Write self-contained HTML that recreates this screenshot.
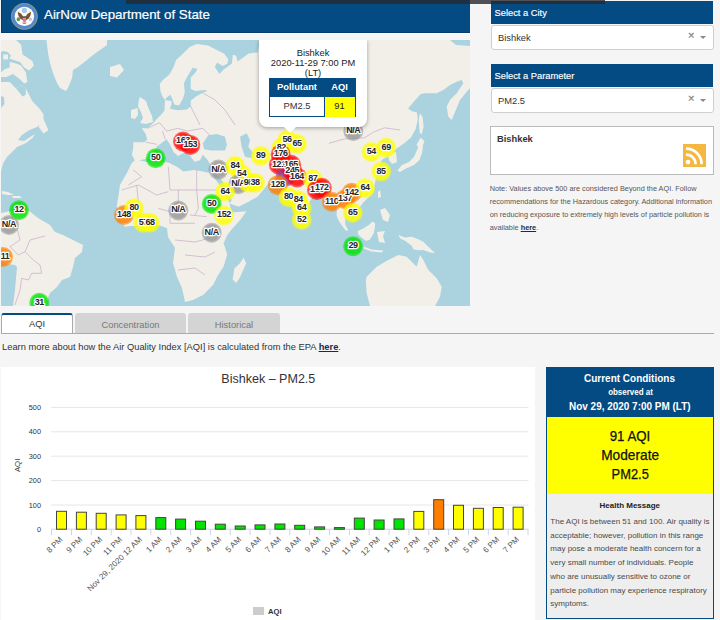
<!DOCTYPE html>
<html><head><meta charset="utf-8">
<style>
*{box-sizing:border-box}
html,body{margin:0;padding:0}
body{width:720px;height:620px;overflow:hidden;position:relative;background:#f5f5f5;font-family:"Liberation Sans",sans-serif;color:#333}
.abs{position:absolute}
#hdr{left:1px;top:0;width:469px;height:34px;background:#044a83;border-bottom:1px solid #fff;box-shadow:inset 1px -1px 0 #023c70}
#hdr .t{position:absolute;left:43px;top:5.8px;font-size:13.33px;line-height:18px;color:#fff;-webkit-text-stroke:0.2px #fff}
#topbar{left:126px;top:0;width:479px;height:3.5px;background:rgba(37,40,48,0.8);z-index:5}
#map{left:1px;top:40px;width:469px;height:266px;overflow:hidden;background:#aad3df}
.rh{left:491px;width:222px;height:23px;background:#044a83;color:#fff;font-size:9.33px;padding:7px 0 0 3.5px;-webkit-text-stroke:0.15px #fff}
.sel{left:491px;width:223px;height:25px;background:#fff;border:1px solid #cfcfcf;border-radius:3px;font-size:9.33px;padding:6.5px 0 0 6px;color:#333}
.sel .x{position:absolute;left:196px;top:3px;font-size:11px;line-height:12px;color:#888;-webkit-text-stroke:0.3px #888}
.sel .ar{position:absolute;left:208px;top:10px;width:0;height:0;border-left:3px solid transparent;border-right:3px solid transparent;border-top:3px solid #888}
#rss{left:490px;top:126px;width:224px;height:49px;background:#fff;border:1px solid #bbb}
#note{left:489.7px;top:182px;width:225px;font-size:7.33px;line-height:13px;color:#555}
.tab{top:313px;height:21px;background:#d4d4d4;border-radius:3px 3px 0 0;font-size:9.33px;color:#777;text-align:center;padding-top:6.5px}
#tabline{left:1px;top:333px;width:713px;height:1px;background:#aaa}
#learn{left:2px;top:341.5px;font-size:9.33px;color:#333;white-space:nowrap}
#learn b,#note b{color:#1a2a4a;text-decoration:underline}
#chart{left:1px;top:367px;width:534px;height:253px;background:#fff}
#cc{left:546px;top:367px;width:168px;height:252px;border:1px solid #044a83;background:#eee}
</style></head><body>
<div id="hdr" class="abs">
 <svg class="abs" style="left:10px;top:3px" width="28" height="28" viewBox="0 0 28 28">
  <circle cx="13.4" cy="13.4" r="13.1" fill="#5588cc" stroke="#a9ad6c" stroke-width="0.7"/>
  <circle cx="13.4" cy="13.4" r="9.7" fill="#fbfbfb"/>
  <circle cx="13.4" cy="7.4" r="2.6" fill="#a9c9e2"/>
  <path d="M6.6,8.8 L10.2,10.7 L12.1,13.4 L11.8,17.3 L9.1,15.6 L7.4,12.4Z M20.2,8.8 L16.6,10.7 L14.7,13.4 L15,17.3 L17.7,15.6 L19.4,12.4Z" fill="#7b5126"/>
  <path d="M7.5,7.8 L8.5,9 L7.5,9.5Z M19.3,7.8 L18.3,9 L19.3,9.5Z" fill="#d8c050"/>
  <ellipse cx="7.4" cy="16.2" rx="1.7" ry="2" fill="#5a9a50"/>
  <ellipse cx="19.4" cy="16.4" rx="1.6" ry="1.8" fill="#c8c8c8"/>
  <rect x="11.8" y="13.2" width="3.3" height="2" fill="#3f63a8"/>
  <path d="M11.8,15.2 L15.1,15.2 L15.1,18.3 L13.45,19.5 L11.8,18.3Z" fill="#e07a7e"/>
  <path d="M11,19.5 L15.8,19.5 L14.5,21 L12.3,21Z" fill="#a09080"/>
 </svg>
 <div class="t">AirNow Department of State</div>
</div>
<div id="topbar" class="abs"></div>
<div id="map" class="abs">
 <svg width="469" height="266" viewBox="1 40 469 266" style="display:block">
  <g fill="#f2efe9"><path d="M1.0,40.0 L16.0,40.0 L21.0,44.8 L22.6,54.5 L32.3,61.0 L33.9,65.8 L29.0,70.6 L24.2,67.4 L20.0,62.0 L14.0,60.0 L9.0,58.5 L11.0,56.0 L8.0,52.0 L3.0,51.0 L1.0,52.0Z"/><path d="M3.2,54.5 L8.0,54.5 L8.0,59.4 L3.2,59.4Z"/><path d="M9.7,62.0 L16.0,63.5 L21.0,65.5 L25.8,72.3 L27.4,82.0 L24.2,83.5 L19.4,78.7 L12.9,73.9 L6.5,77.0 L1.0,77.0 L1.0,72.3 L5.0,69.0 L9.7,67.4Z"/><path d="M1.0,82.0 L9.7,82.0 L16.0,88.4 L21.0,85.2 L25.8,88.4 L27.4,91.6 L32.3,101.3 L38.7,107.7 L43.5,114.2 L43.5,119.0 L37.1,127.1 L29.0,130.3 L22.0,135.0 L18.0,140.0 L24.0,141.0 L35.0,134.0 L33.0,137.5 L26.0,143.0 L17.0,147.0 L12.0,152.0 L7.0,157.0 L3.3,163.0 L1.7,168.0 L1.0,172.0Z"/><path d="M47.0,41.0 L53.0,41.0 L54.0,48.0 L49.0,49.0Z"/><path d="M38.7,120.6 L43.5,119.0 L48.4,130.3 L43.5,133.5 L38.7,127.1Z"/><path d="M46.5,40.0 L107.0,40.0 L107.0,45.0 L93.0,55.0 L87.0,60.0 L78.0,67.0 L73.0,70.0 L72.0,78.0 L68.0,88.0 L66.0,91.0 L60.0,88.0 L57.0,83.0 L53.0,73.0 L50.0,63.0 L48.0,53.0Z"/><path d="M110.0,67.0 L120.0,64.0 L124.0,70.0 L117.0,77.5 L110.0,76.0Z"/><path d="M2.0,191.0 L8.0,192.0 L14.0,195.0 L8.0,195.0 L2.0,194.0Z"/><path d="M12.0,196.0 L20.0,196.0 L22.0,198.0 L13.0,198.0Z"/><path d="M1.0,213.0 L10.0,211.0 L28.0,210.0 L38.0,218.0 L50.0,225.0 L55.0,232.0 L63.0,235.0 L73.0,240.0 L83.0,245.0 L82.0,252.0 L75.0,258.0 L73.0,267.0 L70.0,277.0 L62.0,280.0 L57.0,287.0 L50.0,293.0 L47.0,300.0 L45.0,306.0 L13.0,306.0 L15.0,290.0 L17.0,267.0 L15.0,265.0 L1.0,263.0Z"/><path d="M134.7,160.3 L131.9,154.7 L133.3,147.8 L133.3,142.2 L144.4,142.2 L147.2,139.4 L145.8,133.9 L141.7,128.3 L147.2,128.3 L153.3,123.3 L155.8,120.0 L161.6,114.2 L164.5,110.3 L165.0,100.0 L162.6,96.8 L160.6,91.9 L159.7,84.2 L162.6,80.3 L169.4,74.5 L173.2,67.7 L176.1,60.0 L183.3,53.3 L190.0,46.7 L197.0,44.0 L208.0,45.6 L214.8,49.0 L223.9,53.5 L228.4,59.2 L227.2,63.7 L222.7,66.0 L217.1,62.6 L214.8,67.1 L219.3,73.9 L223.9,69.3 L231.8,63.7 L232.9,54.7 L236.3,55.8 L237.4,61.4 L240.8,59.2 L248.7,53.5 L257.7,52.4 L260.0,40.0 L450.0,40.0 L456.0,45.0 L470.0,46.0 L470.0,88.3 L466.7,91.7 L460.0,100.0 L451.7,120.0 L448.3,116.7 L446.7,106.7 L450.0,100.0 L456.7,93.3 L463.3,83.3 L461.7,80.0 L456.7,81.7 L450.0,85.0 L443.3,90.0 L436.7,93.3 L425.0,93.3 L420.7,93.9 L414.8,100.6 L408.1,108.4 L411.9,111.3 L416.8,112.3 L417.8,119.0 L415.8,128.7 L411.0,137.4 L404.2,143.2 L397.4,148.1 L390.0,155.0 L381.7,160.0 L377.7,171.0 L375.0,183.0 L373.2,192.6 L363.1,202.7 L359.7,207.3 L356.0,212.0 L350.0,208.0 L345.0,212.0 L345.3,224.4 L348.2,230.2 L346.3,231.1 L342.4,226.3 L338.6,220.5 L336.6,215.6 L337.0,205.0 L333.0,195.0 L325.0,190.0 L315.0,192.0 L308.0,205.0 L303.0,218.0 L300.0,226.0 L297.2,212.4 L291.6,198.9 L284.8,187.6 L278.0,188.0 L269.0,180.8 L267.9,184.2 L263.4,189.8 L257.7,196.6 L247.6,202.2 L238.5,206.8 L229.5,203.4 L231.8,212.4 L246.4,211.3 L240.8,219.2 L231.8,229.3 L227.3,235.0 L223.6,243.3 L227.2,254.2 L223.6,266.8 L220.0,272.0 L217.0,277.0 L213.0,285.0 L203.0,295.0 L193.0,300.0 L185.0,302.0 L182.0,288.0 L177.0,277.0 L173.0,263.0 L175.0,248.0 L168.0,237.0 L167.0,228.0 L158.0,225.0 L150.0,224.0 L140.0,226.0 L130.0,226.0 L125.0,226.7 L120.0,220.0 L116.7,206.7 L118.3,196.7 L120.0,185.0 L126.7,173.3 L131.7,163.3 L134.0,161.0Z"/></g>
  <g fill="#aad3df"><path d="M16.0,88.4 L21.0,85.2 L25.8,88.4 L25.8,94.8 L22.6,96.5 L19.0,92.0Z"/><path d="M1.0,96.0 L4.0,97.0 L4.5,104.0 L1.0,108.0Z"/><path d="M138.9,160.3 L145.8,158.9 L152.8,154.7 L156.9,146.4 L162.5,142.2 L166.7,139.4 L169.4,143.6 L173.6,151.9 L177.8,156.1 L183.3,153.3 L186.1,151.9 L190.3,156.1 L194.4,161.7 L200.0,160.3 L202.8,154.7 L206.9,158.9 L211.1,165.8 L212.0,170.0 L208.3,172.8 L202.8,171.4 L194.4,170.0 L183.3,171.4 L177.8,167.2 L169.4,163.1 L163.9,161.7 L155.6,161.7 L145.8,161.7Z"/><path d="M202.8,143.6 L208.3,135.3 L216.7,133.9 L225.0,136.7 L227.0,145.0 L225.0,150.6 L211.1,150.6 L204.2,149.2Z"/><path d="M240.0,136.7 L246.7,133.3 L250.0,140.0 L248.3,146.7 L253.3,153.3 L251.7,158.3 L245.0,156.7 L241.7,146.7Z"/><path d="M215.0,173.3 L221.7,180.0 L226.7,188.3 L231.7,200.0 L230.0,203.3 L225.0,195.0 L218.3,183.3 L213.3,176.7Z"/><path d="M248.0,176.0 L256.0,178.0 L263.0,183.0 L260.0,185.0 L252.0,182.0 L247.0,179.0Z"/><path d="M165.0,100.0 L166.5,97.8 L170.3,94.8 L172.3,98.7 L174.2,104.5 L179.0,105.5 L182.9,98.7 L184.8,91.9 L183.9,83.2 L186.8,77.4 L192.6,67.7 L197.4,68.7 L195.5,72.6 L190.7,77.4 L190.7,89.0 L195.5,91.0 L205.2,90.0 L207.1,91.0 L202.3,92.9 L195.5,96.8 L190.7,100.7 L190.7,106.5 L186.8,109.4 L179.0,110.3 L173.2,109.4 L170.0,108.5 L171.5,104.0 L171.5,101.0 L168.0,100.5Z"/></g><g fill="#f2efe9"><path d="M140.0,97.0 L146.0,101.0 L148.0,107.0 L152.0,116.0 L153.0,122.0 L146.0,124.0 L140.0,123.0 L143.0,118.0 L141.0,112.0 L138.0,106.0 L139.0,99.0Z"/><path d="M131.0,110.0 L137.5,108.0 L138.0,115.0 L135.0,119.0 L131.0,118.0Z"/><path d="M397.5,170.5 L402.0,165.0 L409.0,162.0 L414.0,157.0 L417.0,150.0 L419.5,145.0 L423.0,146.0 L422.0,153.0 L419.5,160.0 L414.0,165.0 L406.0,168.5 L400.0,172.0Z"/><path d="M416.8,144.2 L420.7,137.4 L424.5,141.3 L422.6,146.1 L418.7,149.0Z"/><path d="M419.7,113.2 L422.6,117.1 L423.6,126.8 L421.6,134.5 L419.7,132.6 L418.7,121.0Z"/><path d="M388.0,154.0 L396.0,152.0 L397.0,162.0 L392.0,164.0 L389.0,160.0Z"/><path d="M378.0,192.0 L380.0,190.0 L381.0,197.0 L378.0,198.0Z"/><path d="M380.0,210.0 L385.0,208.0 L390.0,215.0 L388.0,222.0 L383.0,220.0Z"/><path d="M357.9,231.1 L363.7,228.2 L369.5,224.4 L372.4,221.5 L375.3,223.4 L374.4,230.2 L373.4,234.0 L369.5,239.9 L365.7,240.8 L360.8,236.9 L357.9,234.0Z"/><path d="M363.7,246.6 L371.5,249.5 L383.1,250.5 L382.1,252.4 L371.5,251.5 L363.7,248.6Z"/><path d="M377.0,232.0 L385.0,231.0 L383.0,236.0 L385.0,243.0 L379.0,242.0Z"/><path d="M398.3,235.0 L405.0,237.5 L411.7,236.7 L418.3,239.2 L423.3,241.7 L428.3,246.7 L435.0,253.0 L430.0,252.5 L423.3,250.0 L418.3,250.3 L413.3,249.2 L411.7,245.8 L405.0,240.8 L400.0,238.3Z"/><path d="M366.7,276.7 L376.7,266.7 L388.3,260.0 L398.3,255.0 L406.7,256.7 L410.0,260.0 L416.7,266.7 L420.0,255.0 L423.3,260.0 L428.3,270.0 L436.7,278.3 L441.7,286.7 L440.0,296.7 L435.0,306.0 L370.0,306.0 L366.7,293.3 L365.8,280.0Z"/><path d="M243.5,257.8 L246.2,263.2 L239.9,277.6 L236.2,283.0 L232.6,279.4 L234.4,268.6 L239.9,263.2Z"/></g>
  <g fill="none" stroke="#cbb3cb" stroke-width="0.8"><polyline points="121.7,190.0 138.3,185.0 156.7,195.0 168.3,191.7"/><polyline points="168.3,166.7 170.0,190.0"/><polyline points="196.7,170.0 196.7,190.0"/><polyline points="170.0,190.0 178.3,190.0 196.7,190.0 216.7,190.0"/><polyline points="178.3,190.0 178.3,203.3"/><polyline points="196.7,190.0 198.3,208.3 195.0,215.0"/><polyline points="136.7,185.0 138.3,201.7"/><polyline points="158.3,208.3 170.0,211.7 170.0,223.3"/><polyline points="190.0,215.0 206.7,216.7"/><polyline points="170.0,223.3 195.0,223.3"/><polyline points="133.3,170.0 141.7,176.7 128.3,185.0"/><polyline points="175.0,240.0 195.0,242.0 210.0,238.0"/><polyline points="185.0,255.0 205.0,257.0 215.0,252.0"/><polyline points="178.0,270.0 195.0,268.0 205.0,275.0"/><polyline points="16.7,226.7 20.0,240.0 10.0,246.7 18.3,255.0 25.0,251.7 33.3,260.0 40.0,265.0 41.7,273.3 31.7,273.3 28.3,280.0 21.7,278.3 20.0,290.0 15.0,305.0"/><polyline points="25.0,251.7 30.0,240.0 45.0,236.0"/><polyline points="147.2,128.3 159.7,122.8 166.7,131.1 177.8,128.3 187.5,131.1 202.8,128.3 211.1,136.7"/><polyline points="162.5,131.1 165.3,139.4"/><polyline points="145.8,142.2 156.9,144.3"/><polyline points="190.0,105.0 195.0,115.0 200.0,125.0"/><polyline points="203.0,93.0 215.0,100.0 225.0,110.0 235.0,125.0"/><polyline points="328.9,143.3 344.4,138.9 364.4,137.8 373.3,132.2 384.4,127.8 400.0,130.0"/></g>
  <g><circle cx="183" cy="141.5" r="10" fill="#ff0000" fill-opacity="0.6"/><circle cx="183" cy="141.5" r="8.5" fill="#ff0000" fill-opacity="0.6"/><circle cx="190.3" cy="144.9" r="10" fill="#ff0000" fill-opacity="0.6"/><circle cx="190.3" cy="144.9" r="8.5" fill="#ff0000" fill-opacity="0.6"/><circle cx="155.7" cy="158.3" r="10" fill="#00e400" fill-opacity="0.6"/><circle cx="155.7" cy="158.3" r="8.5" fill="#00e400" fill-opacity="0.6"/><circle cx="218.4" cy="169.6" r="10" fill="#999999" fill-opacity="0.6"/><circle cx="218.4" cy="169.6" r="8.5" fill="#999999" fill-opacity="0.6"/><circle cx="235" cy="166" r="10" fill="#ffff00" fill-opacity="0.6"/><circle cx="235" cy="166" r="8.5" fill="#ffff00" fill-opacity="0.6"/><circle cx="241.7" cy="174.3" r="10" fill="#ffff00" fill-opacity="0.6"/><circle cx="241.7" cy="174.3" r="8.5" fill="#ffff00" fill-opacity="0.6"/><circle cx="238.3" cy="184.3" r="10" fill="#999999" fill-opacity="0.6"/><circle cx="238.3" cy="184.3" r="8.5" fill="#999999" fill-opacity="0.6"/><circle cx="248.3" cy="182.7" r="10" fill="#ffff00" fill-opacity="0.6"/><circle cx="248.3" cy="182.7" r="8.5" fill="#ffff00" fill-opacity="0.6"/><circle cx="255" cy="182.7" r="10" fill="#ffff00" fill-opacity="0.6"/><circle cx="255" cy="182.7" r="8.5" fill="#ffff00" fill-opacity="0.6"/><circle cx="225" cy="191.7" r="10" fill="#ffff00" fill-opacity="0.6"/><circle cx="225" cy="191.7" r="8.5" fill="#ffff00" fill-opacity="0.6"/><circle cx="211.7" cy="204" r="10" fill="#00e400" fill-opacity="0.6"/><circle cx="211.7" cy="204" r="8.5" fill="#00e400" fill-opacity="0.6"/><circle cx="224" cy="215.5" r="10" fill="#ffff00" fill-opacity="0.6"/><circle cx="224" cy="215.5" r="8.5" fill="#ffff00" fill-opacity="0.6"/><circle cx="211.7" cy="232.7" r="10" fill="#999999" fill-opacity="0.6"/><circle cx="211.7" cy="232.7" r="8.5" fill="#999999" fill-opacity="0.6"/><circle cx="178.3" cy="210.5" r="10" fill="#999999" fill-opacity="0.6"/><circle cx="178.3" cy="210.5" r="8.5" fill="#999999" fill-opacity="0.6"/><circle cx="124" cy="215" r="10" fill="#ff7e00" fill-opacity="0.6"/><circle cx="124" cy="215" r="8.5" fill="#ff7e00" fill-opacity="0.6"/><circle cx="134" cy="208.3" r="10" fill="#ffff00" fill-opacity="0.6"/><circle cx="134" cy="208.3" r="8.5" fill="#ffff00" fill-opacity="0.6"/><circle cx="143.3" cy="222.7" r="10" fill="#ffff00" fill-opacity="0.6"/><circle cx="143.3" cy="222.7" r="8.5" fill="#ffff00" fill-opacity="0.6"/><circle cx="150" cy="222.7" r="10" fill="#ffff00" fill-opacity="0.6"/><circle cx="150" cy="222.7" r="8.5" fill="#ffff00" fill-opacity="0.6"/><circle cx="19" cy="210.3" r="10" fill="#00e400" fill-opacity="0.6"/><circle cx="19" cy="210.3" r="8.5" fill="#00e400" fill-opacity="0.6"/><circle cx="9" cy="225" r="10" fill="#999999" fill-opacity="0.6"/><circle cx="9" cy="225" r="8.5" fill="#999999" fill-opacity="0.6"/><circle cx="3" cy="257" r="10" fill="#ff7e00" fill-opacity="0.6"/><circle cx="3" cy="257" r="8.5" fill="#ff7e00" fill-opacity="0.6"/><circle cx="39.3" cy="302.7" r="10" fill="#00e400" fill-opacity="0.6"/><circle cx="39.3" cy="302.7" r="8.5" fill="#00e400" fill-opacity="0.6"/><circle cx="260.7" cy="156" r="10" fill="#ffff00" fill-opacity="0.6"/><circle cx="260.7" cy="156" r="8.5" fill="#ffff00" fill-opacity="0.6"/><circle cx="287" cy="140" r="10" fill="#ffff00" fill-opacity="0.6"/><circle cx="287" cy="140" r="8.5" fill="#ffff00" fill-opacity="0.6"/><circle cx="297" cy="144" r="10" fill="#ffff00" fill-opacity="0.6"/><circle cx="297" cy="144" r="8.5" fill="#ffff00" fill-opacity="0.6"/><circle cx="281.3" cy="147.8" r="10" fill="#ffff00" fill-opacity="0.6"/><circle cx="281.3" cy="147.8" r="8.5" fill="#ffff00" fill-opacity="0.6"/><circle cx="280.7" cy="154.4" r="10" fill="#ff0000" fill-opacity="0.6"/><circle cx="280.7" cy="154.4" r="8.5" fill="#ff0000" fill-opacity="0.6"/><circle cx="278.9" cy="164.7" r="10" fill="#ff0000" fill-opacity="0.6"/><circle cx="278.9" cy="164.7" r="8.5" fill="#ff0000" fill-opacity="0.6"/><circle cx="291" cy="164.7" r="10" fill="#ff0000" fill-opacity="0.6"/><circle cx="291" cy="164.7" r="8.5" fill="#ff0000" fill-opacity="0.6"/><circle cx="285.6" cy="176.8" r="10" fill="#8f3f97" fill-opacity="0.6"/><circle cx="285.6" cy="176.8" r="8.5" fill="#8f3f97" fill-opacity="0.6"/><circle cx="292.2" cy="170.7" r="10" fill="#ff0000" fill-opacity="0.6"/><circle cx="292.2" cy="170.7" r="8.5" fill="#ff0000" fill-opacity="0.6"/><circle cx="297" cy="177.4" r="10" fill="#ff0000" fill-opacity="0.6"/><circle cx="297" cy="177.4" r="8.5" fill="#ff0000" fill-opacity="0.6"/><circle cx="312.8" cy="179.2" r="10" fill="#ffff00" fill-opacity="0.6"/><circle cx="312.8" cy="179.2" r="8.5" fill="#ffff00" fill-opacity="0.6"/><circle cx="317" cy="190" r="10" fill="#ff0000" fill-opacity="0.6"/><circle cx="317" cy="190" r="8.5" fill="#ff0000" fill-opacity="0.6"/><circle cx="321.8" cy="187.7" r="10" fill="#ff0000" fill-opacity="0.6"/><circle cx="321.8" cy="187.7" r="8.5" fill="#ff0000" fill-opacity="0.6"/><circle cx="277.7" cy="185.2" r="10" fill="#ff7e00" fill-opacity="0.6"/><circle cx="277.7" cy="185.2" r="8.5" fill="#ff7e00" fill-opacity="0.6"/><circle cx="288.6" cy="197.3" r="10" fill="#ffff00" fill-opacity="0.6"/><circle cx="288.6" cy="197.3" r="8.5" fill="#ffff00" fill-opacity="0.6"/><circle cx="298.3" cy="200.3" r="10" fill="#ffff00" fill-opacity="0.6"/><circle cx="298.3" cy="200.3" r="8.5" fill="#ffff00" fill-opacity="0.6"/><circle cx="301.7" cy="208.3" r="10" fill="#ffff00" fill-opacity="0.6"/><circle cx="301.7" cy="208.3" r="8.5" fill="#ffff00" fill-opacity="0.6"/><circle cx="301.7" cy="220" r="10" fill="#ffff00" fill-opacity="0.6"/><circle cx="301.7" cy="220" r="8.5" fill="#ffff00" fill-opacity="0.6"/><circle cx="331.7" cy="201.7" r="10" fill="#ff7e00" fill-opacity="0.6"/><circle cx="331.7" cy="201.7" r="8.5" fill="#ff7e00" fill-opacity="0.6"/><circle cx="345" cy="199.3" r="10" fill="#ff7e00" fill-opacity="0.6"/><circle cx="345" cy="199.3" r="8.5" fill="#ff7e00" fill-opacity="0.6"/><circle cx="351.7" cy="192.7" r="10" fill="#ff7e00" fill-opacity="0.6"/><circle cx="351.7" cy="192.7" r="8.5" fill="#ff7e00" fill-opacity="0.6"/><circle cx="365" cy="188.3" r="10" fill="#ffff00" fill-opacity="0.6"/><circle cx="365" cy="188.3" r="8.5" fill="#ffff00" fill-opacity="0.6"/><circle cx="352.7" cy="212.7" r="10" fill="#ffff00" fill-opacity="0.6"/><circle cx="352.7" cy="212.7" r="8.5" fill="#ffff00" fill-opacity="0.6"/><circle cx="371.3" cy="152" r="10" fill="#ffff00" fill-opacity="0.6"/><circle cx="371.3" cy="152" r="8.5" fill="#ffff00" fill-opacity="0.6"/><circle cx="386.2" cy="147.7" r="10" fill="#ffff00" fill-opacity="0.6"/><circle cx="386.2" cy="147.7" r="8.5" fill="#ffff00" fill-opacity="0.6"/><circle cx="381.1" cy="171.6" r="10" fill="#ffff00" fill-opacity="0.6"/><circle cx="381.1" cy="171.6" r="8.5" fill="#ffff00" fill-opacity="0.6"/><circle cx="353.3" cy="131" r="10" fill="#999999" fill-opacity="0.6"/><circle cx="353.3" cy="131" r="8.5" fill="#999999" fill-opacity="0.6"/><circle cx="353.1" cy="246.2" r="10" fill="#00e400" fill-opacity="0.6"/><circle cx="353.1" cy="246.2" r="8.5" fill="#00e400" fill-opacity="0.6"/></g>
  <g font-family="Liberation Sans" font-weight="bold" font-size="9" letter-spacing="-0.4" text-anchor="middle" fill="#262626" stroke="#fff" stroke-width="2.4" paint-order="stroke" stroke-linejoin="round"><text x="183" y="143.4">163</text><text x="190.3" y="146.8">153</text><text x="155.7" y="160.20000000000002">50</text><text x="218.4" y="171.5">N/A</text><text x="235" y="167.9">84</text><text x="241.7" y="176.20000000000002">54</text><text x="238.3" y="186.20000000000002">N/A</text><text x="248.3" y="184.6">98</text><text x="255" y="184.6">38</text><text x="225" y="193.6">64</text><text x="211.7" y="205.9">50</text><text x="224" y="217.4">152</text><text x="211.7" y="234.6">N/A</text><text x="178.3" y="212.4">N/A</text><text x="124" y="216.9">148</text><text x="134" y="210.20000000000002">80</text><text x="143.3" y="224.6">57</text><text x="150" y="224.6">68</text><text x="19" y="212.20000000000002">12</text><text x="9" y="226.9">N/A</text><text x="3" y="258.9">111</text><text x="39.3" y="304.59999999999997">31</text><text x="260.7" y="157.9">89</text><text x="287" y="141.9">56</text><text x="297" y="145.9">65</text><text x="281.3" y="149.70000000000002">82</text><text x="280.7" y="156.3">176</text><text x="278.9" y="166.6">121</text><text x="291" y="166.6">165</text><text x="285.6" y="178.70000000000002"></text><text x="292.2" y="172.6">245</text><text x="297" y="179.3">164</text><text x="312.8" y="181.1">87</text><text x="317" y="191.9">150</text><text x="321.8" y="189.6">172</text><text x="277.7" y="187.1">128</text><text x="288.6" y="199.20000000000002">80</text><text x="298.3" y="202.20000000000002">84</text><text x="301.7" y="210.20000000000002">64</text><text x="301.7" y="221.9">52</text><text x="331.7" y="203.6">110</text><text x="345" y="201.20000000000002">137</text><text x="351.7" y="194.6">142</text><text x="365" y="190.20000000000002">64</text><text x="352.7" y="214.6">65</text><text x="371.3" y="153.9">54</text><text x="386.2" y="149.6">69</text><text x="381.1" y="173.5">85</text><text x="353.3" y="132.9">N/A</text><text x="353.1" y="248.1">29</text></g>
 </svg>
 <div class="abs" style="left:258px;top:0;width:108px;height:87px;background:#fff;border-radius:0 0 8px 8px;box-shadow:0 1px 4px rgba(0,0,0,0.35)"></div>
 <div class="abs" style="left:282px;top:86px;width:0;height:0;border-left:7px solid transparent;border-right:7px solid transparent;border-top:7px solid #fff"></div>
 <div class="abs" style="left:258px;top:8px;width:108px;text-align:center;font-size:9.33px;line-height:10px;color:#222">Bishkek<br>2020-11-29 7:00 PM<br>(LT)</div>
 <div class="abs" style="left:268px;top:38px;width:87px;height:39px;border:1px solid #044a83;background:#fff">
   <div class="abs" style="left:0;top:0;width:85px;height:18px;background:#044a83"></div>
   <div class="abs" style="left:0;top:2.5px;width:54px;text-align:center;color:#fff;font-weight:bold;font-size:9.33px">Pollutant</div>
   <div class="abs" style="left:54px;top:2.5px;width:31px;text-align:center;color:#fff;font-weight:bold;font-size:9.33px">AQI</div>
   <div class="abs" style="left:54px;top:18px;width:1px;height:20px;background:#044a83"></div>
   <div class="abs" style="left:55px;top:18px;width:30px;height:20px;background:#ffff00"></div>
   <div class="abs" style="left:0;top:21.5px;width:54px;text-align:center;color:#333;font-size:9.33px">PM2.5</div>
   <div class="abs" style="left:54px;top:21.5px;width:31px;text-align:center;color:#222;font-size:9.33px">91</div>
 </div>
</div>

<div class="abs rh" style="top:1px">Select a City</div>
<div class="abs sel" style="top:25px">Bishkek<span class="x">×</span><span class="ar"></span></div>
<div class="abs rh" style="top:64px">Select a Parameter</div>
<div class="abs sel" style="top:88px">PM2.5<span class="x">×</span><span class="ar"></span></div>
<div id="rss" class="abs">
 <div class="abs" style="left:6px;top:7px;font-weight:bold;font-size:9.33px;color:#333">Bishkek</div>
 <svg class="abs" style="left:192px;top:17px" width="23" height="23" viewBox="0 0 23 23">
  <rect width="23" height="23" fill="#f4b73f"/>
  <circle cx="5" cy="18.1" r="2.4" fill="#fff"/>
  <path d="M3,10.6 A9.6,9.6 0 0 1 12.6,20.2" fill="none" stroke="#fff" stroke-width="2.7"/>
  <path d="M3,4.6 A15.6,15.6 0 0 1 18.6,20.2" fill="none" stroke="#fff" stroke-width="2.7"/>
 </svg>
</div>
<div id="note" class="abs">Note: Values above 500 are considered Beyond the AQI. Follow<br>recommendations for the Hazardous category. Additional information<br>on reducing exposure to extremely high levels of particle pollution is<br>available <b>here</b>.</div>

<div class="abs tab" style="left:1px;width:72px;background:#fff;border:1px solid #aaa;border-top:2px solid #044a83;border-bottom:none;color:#333;padding-top:4px">AQI</div>
<div class="abs tab" style="left:75px;width:111px">Concentration</div>
<div class="abs tab" style="left:188px;width:92px">Historical</div>
<div id="tabline" class="abs"></div>
<div id="learn" class="abs">Learn more about how the Air Quality Index [AQI] is calculated from the EPA <b>here</b>.</div>

<div id="chart" class="abs"><svg width="534" height="253" viewBox="1 367 534 253" style="display:block" font-family="Liberation Sans"><line x1="51" y1="407.4" x2="528.5" y2="407.4" stroke="#e6e6e6" stroke-width="1"/><text x="41" y="410.0" text-anchor="end" font-size="7.3" fill="#333">500</text><line x1="51" y1="431.8" x2="528.5" y2="431.8" stroke="#e6e6e6" stroke-width="1"/><text x="41" y="434.40000000000003" text-anchor="end" font-size="7.3" fill="#333">400</text><line x1="51" y1="456.2" x2="528.5" y2="456.2" stroke="#e6e6e6" stroke-width="1"/><text x="41" y="458.8" text-anchor="end" font-size="7.3" fill="#333">300</text><line x1="51" y1="480.6" x2="528.5" y2="480.6" stroke="#e6e6e6" stroke-width="1"/><text x="41" y="483.20000000000005" text-anchor="end" font-size="7.3" fill="#333">200</text><line x1="51" y1="505.0" x2="528.5" y2="505.0" stroke="#e6e6e6" stroke-width="1"/><text x="41" y="507.6" text-anchor="end" font-size="7.3" fill="#333">100</text><text x="41" y="531.8000000000001" text-anchor="end" font-size="7.3" fill="#333">0</text><line x1="51" y1="529.2" x2="528.5" y2="529.2" stroke="#ccd6eb" stroke-width="1"/><line x1="51.6" y1="529.2" x2="51.6" y2="535.2" stroke="#ccd6eb" stroke-width="1"/><line x1="71.5" y1="529.2" x2="71.5" y2="535.2" stroke="#ccd6eb" stroke-width="1"/><line x1="91.3" y1="529.2" x2="91.3" y2="535.2" stroke="#ccd6eb" stroke-width="1"/><line x1="111.2" y1="529.2" x2="111.2" y2="535.2" stroke="#ccd6eb" stroke-width="1"/><line x1="131.0" y1="529.2" x2="131.0" y2="535.2" stroke="#ccd6eb" stroke-width="1"/><line x1="150.8" y1="529.2" x2="150.8" y2="535.2" stroke="#ccd6eb" stroke-width="1"/><line x1="170.7" y1="529.2" x2="170.7" y2="535.2" stroke="#ccd6eb" stroke-width="1"/><line x1="190.6" y1="529.2" x2="190.6" y2="535.2" stroke="#ccd6eb" stroke-width="1"/><line x1="210.4" y1="529.2" x2="210.4" y2="535.2" stroke="#ccd6eb" stroke-width="1"/><line x1="230.2" y1="529.2" x2="230.2" y2="535.2" stroke="#ccd6eb" stroke-width="1"/><line x1="250.1" y1="529.2" x2="250.1" y2="535.2" stroke="#ccd6eb" stroke-width="1"/><line x1="270.0" y1="529.2" x2="270.0" y2="535.2" stroke="#ccd6eb" stroke-width="1"/><line x1="289.8" y1="529.2" x2="289.8" y2="535.2" stroke="#ccd6eb" stroke-width="1"/><line x1="309.7" y1="529.2" x2="309.7" y2="535.2" stroke="#ccd6eb" stroke-width="1"/><line x1="329.5" y1="529.2" x2="329.5" y2="535.2" stroke="#ccd6eb" stroke-width="1"/><line x1="349.4" y1="529.2" x2="349.4" y2="535.2" stroke="#ccd6eb" stroke-width="1"/><line x1="369.2" y1="529.2" x2="369.2" y2="535.2" stroke="#ccd6eb" stroke-width="1"/><line x1="389.1" y1="529.2" x2="389.1" y2="535.2" stroke="#ccd6eb" stroke-width="1"/><line x1="408.9" y1="529.2" x2="408.9" y2="535.2" stroke="#ccd6eb" stroke-width="1"/><line x1="428.8" y1="529.2" x2="428.8" y2="535.2" stroke="#ccd6eb" stroke-width="1"/><line x1="448.6" y1="529.2" x2="448.6" y2="535.2" stroke="#ccd6eb" stroke-width="1"/><line x1="468.5" y1="529.2" x2="468.5" y2="535.2" stroke="#ccd6eb" stroke-width="1"/><line x1="488.3" y1="529.2" x2="488.3" y2="535.2" stroke="#ccd6eb" stroke-width="1"/><line x1="508.2" y1="529.2" x2="508.2" y2="535.2" stroke="#ccd6eb" stroke-width="1"/><line x1="528.0" y1="529.2" x2="528.0" y2="535.2" stroke="#ccd6eb" stroke-width="1"/><rect x="56.5" y="511.3" width="10" height="17.9" fill="#ffff00" stroke="#444" stroke-width="1"/><rect x="76.4" y="512.2" width="10" height="17.0" fill="#ffff00" stroke="#444" stroke-width="1"/><rect x="96.2" y="513.3" width="10" height="15.9" fill="#ffff00" stroke="#444" stroke-width="1"/><rect x="116.1" y="514.9" width="10" height="14.3" fill="#ffff00" stroke="#444" stroke-width="1"/><rect x="135.9" y="515.6" width="10" height="13.6" fill="#ffff00" stroke="#444" stroke-width="1"/><rect x="155.8" y="517.6" width="10" height="11.6" fill="#00e400" stroke="#444" stroke-width="1"/><rect x="175.6" y="519.1" width="10" height="10.1" fill="#00e400" stroke="#444" stroke-width="1"/><rect x="195.5" y="521.2" width="10" height="8.0" fill="#00e400" stroke="#444" stroke-width="1"/><rect x="215.3" y="524.2" width="10" height="5.0" fill="#00e400" stroke="#444" stroke-width="1"/><rect x="235.2" y="526.0" width="10" height="3.2" fill="#00e400" stroke="#444" stroke-width="1"/><rect x="255.0" y="524.9" width="10" height="4.3" fill="#00e400" stroke="#444" stroke-width="1"/><rect x="274.9" y="524.0" width="10" height="5.2" fill="#00e400" stroke="#444" stroke-width="1"/><rect x="294.7" y="525.3" width="10" height="3.9" fill="#00e400" stroke="#444" stroke-width="1"/><rect x="314.6" y="526.9" width="10" height="2.3" fill="#00e400" stroke="#444" stroke-width="1"/><rect x="334.4" y="527.6" width="10" height="1.6" fill="#00e400" stroke="#444" stroke-width="1"/><rect x="354.3" y="518.1" width="10" height="11.1" fill="#00e400" stroke="#444" stroke-width="1"/><rect x="374.1" y="520.0" width="10" height="9.2" fill="#00e400" stroke="#444" stroke-width="1"/><rect x="394.0" y="518.9" width="10" height="10.3" fill="#00e400" stroke="#444" stroke-width="1"/><rect x="413.8" y="511.4" width="10" height="17.8" fill="#ffff00" stroke="#444" stroke-width="1"/><rect x="433.7" y="499.7" width="10" height="29.5" fill="#ff7e00" stroke="#444" stroke-width="1"/><rect x="453.5" y="505.3" width="10" height="23.9" fill="#ffff00" stroke="#444" stroke-width="1"/><rect x="473.4" y="508.3" width="10" height="20.9" fill="#ffff00" stroke="#444" stroke-width="1"/><rect x="493.2" y="507.5" width="10" height="21.7" fill="#ffff00" stroke="#444" stroke-width="1"/><rect x="513.1" y="507.2" width="10" height="22.0" fill="#ffff00" stroke="#444" stroke-width="1"/><text transform="translate(63.0,540) rotate(-45)" text-anchor="end" font-size="8.1" fill="#555">8 PM</text><text transform="translate(82.9,540) rotate(-45)" text-anchor="end" font-size="8.1" fill="#555">9 PM</text><text transform="translate(102.7,540) rotate(-45)" text-anchor="end" font-size="8.1" fill="#555">10 PM</text><text transform="translate(122.6,540) rotate(-45)" text-anchor="end" font-size="8.1" fill="#555">11 PM</text><text transform="translate(142.4,540) rotate(-45)" text-anchor="end" font-size="8.1" fill="#555">Nov 29, 2020 12 AM</text><text transform="translate(162.3,540) rotate(-45)" text-anchor="end" font-size="8.1" fill="#555">1 AM</text><text transform="translate(182.1,540) rotate(-45)" text-anchor="end" font-size="8.1" fill="#555">2 AM</text><text transform="translate(202.0,540) rotate(-45)" text-anchor="end" font-size="8.1" fill="#555">3 AM</text><text transform="translate(221.8,540) rotate(-45)" text-anchor="end" font-size="8.1" fill="#555">4 AM</text><text transform="translate(241.7,540) rotate(-45)" text-anchor="end" font-size="8.1" fill="#555">5 AM</text><text transform="translate(261.5,540) rotate(-45)" text-anchor="end" font-size="8.1" fill="#555">6 AM</text><text transform="translate(281.4,540) rotate(-45)" text-anchor="end" font-size="8.1" fill="#555">7 AM</text><text transform="translate(301.2,540) rotate(-45)" text-anchor="end" font-size="8.1" fill="#555">8 AM</text><text transform="translate(321.1,540) rotate(-45)" text-anchor="end" font-size="8.1" fill="#555">9 AM</text><text transform="translate(340.9,540) rotate(-45)" text-anchor="end" font-size="8.1" fill="#555">10 AM</text><text transform="translate(360.8,540) rotate(-45)" text-anchor="end" font-size="8.1" fill="#555">11 AM</text><text transform="translate(380.6,540) rotate(-45)" text-anchor="end" font-size="8.1" fill="#555">12 PM</text><text transform="translate(400.5,540) rotate(-45)" text-anchor="end" font-size="8.1" fill="#555">1 PM</text><text transform="translate(420.3,540) rotate(-45)" text-anchor="end" font-size="8.1" fill="#555">2 PM</text><text transform="translate(440.2,540) rotate(-45)" text-anchor="end" font-size="8.1" fill="#555">3 PM</text><text transform="translate(460.0,540) rotate(-45)" text-anchor="end" font-size="8.1" fill="#555">4 PM</text><text transform="translate(479.9,540) rotate(-45)" text-anchor="end" font-size="8.1" fill="#555">5 PM</text><text transform="translate(499.7,540) rotate(-45)" text-anchor="end" font-size="8.1" fill="#555">6 PM</text><text transform="translate(519.6,540) rotate(-45)" text-anchor="end" font-size="8.1" fill="#555">7 PM</text><text transform="translate(20.2,465.4) rotate(-90)" text-anchor="middle" font-size="7.8" fill="#333">AQI</text><text x="221.3" y="382.5" font-size="12" fill="#333" textLength="94" lengthAdjust="spacingAndGlyphs">Bishkek – PM2.5</text><rect x="253" y="607" width="11" height="8" fill="#cccccc"/><text x="268" y="613.8" font-size="7.6" font-weight="bold" fill="#333">AQI</text></svg></div>
<div id="cc" class="abs"><svg width="168" height="252" viewBox="546 367 168 252" style="display:block;position:absolute;left:-1px;top:-1px" font-family="Liberation Sans">
<rect x="546" y="367" width="168" height="50" fill="#044a83"/>
<rect x="547" y="417" width="166" height="77" fill="#ffff00"/>
<g text-anchor="middle" font-weight="bold" fill="#fff">
<text x="629.5" y="381.5" font-size="10.4" textLength="90.9" lengthAdjust="spacingAndGlyphs">Current Conditions</text>
<text x="630.5" y="394.9" font-size="8.8" textLength="44.7" lengthAdjust="spacingAndGlyphs">observed at</text>
<text x="629.8" y="409.7" font-size="10.4" textLength="121.5" lengthAdjust="spacingAndGlyphs">Nov 29, 2020 7:00 PM (LT)</text>
</g>
<g fill="#111" font-size="14.3" stroke="#111" stroke-width="0.25">
<text x="609.7" y="441.2" textLength="40.6" lengthAdjust="spacingAndGlyphs">91 AQI</text>
<text x="601.2" y="459.8" textLength="57.9" lengthAdjust="spacingAndGlyphs">Moderate</text>
<text x="611.6" y="479" textLength="37.2" lengthAdjust="spacingAndGlyphs">PM2.5</text>
</g>
<text x="629.8" y="508" text-anchor="middle" font-weight="bold" font-size="8" fill="#222">Health Message</text>
<g font-size="8" fill="#4a4a4a">
<text x="550.3" y="523.8">The AQI is between 51 and 100. Air quality is</text>
<text x="550.3" y="537.5">acceptable; however, pollution in this range</text>
<text x="550.3" y="551.3">may pose a moderate health concern for a</text>
<text x="550.3" y="565.0">very small number of individuals. People</text>
<text x="550.3" y="578.8">who are unusually sensitive to ozone or</text>
<text x="550.3" y="592.5">particle pollution may experience respiratory</text>
<text x="550.3" y="606.3">symptoms.</text>
</g>
</svg></div>
</body></html>
